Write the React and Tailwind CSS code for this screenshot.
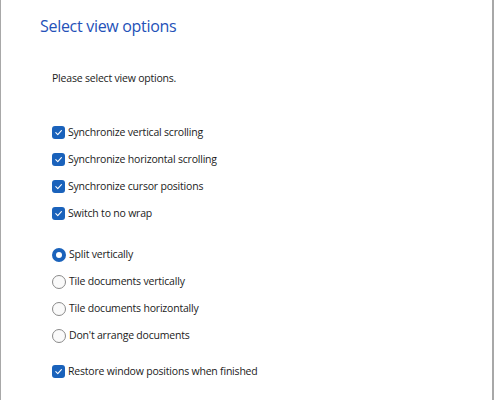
import React from "react";

const font = { fontFamily: '"Open Sans", "Noto Sans", "Liberation Sans", sans-serif' };

function Check({ label }) {
  return (
    <div className="flex h-[27px] items-center">
      <span className="flex h-[13px] w-[13px] items-center justify-center rounded-[3px] bg-[#1a62bb]">
        <svg width="9" height="9" viewBox="0 0 10 10">
          <path d="M2 5.2 L4.2 7.3 L8.2 2.8" fill="none" stroke="#fff" strokeWidth="1.2" strokeLinecap="round" strokeLinejoin="round" />
        </svg>
      </span>
      <span className="ml-[3px] text-[10.5px] tracking-[-0.2px] text-[#1b1b1b]">{label}</span>
    </div>
  );
}

function Radio({ label, checked }) {
  return (
    <div className="flex h-[27px] items-center">
      {checked ? (
        <span className="flex h-[14px] w-[14px] items-center justify-center rounded-full bg-[#1a62bb]">
          <span className="h-[6px] w-[6px] rounded-full bg-white" />
        </span>
      ) : (
        <span className="h-[14px] w-[14px] rounded-full border border-[#8a8a8a] bg-[#fafafa]" />
      )}
      <span className="ml-[3px] text-[10.5px] tracking-[-0.2px] text-[#1b1b1b]">{label}</span>
    </div>
  );
}

export default function App() {
  return (
    <div className="h-[400px] w-[495px] bg-white" style={font}>
      <div className="box-border flex h-full w-[494px] flex-col border-l border-r-2 border-[#a8a8a8] pl-[39px] pt-[14px]">
        <div className="h-[24px] text-[16px] tracking-[-0.3px] leading-[24px] text-[#2451b8]">Select view options</div>
        <div className="mt-[32px] ml-[12px] h-[16px] text-[10.5px] tracking-[-0.2px] leading-[16px] text-[#1b1b1b]">
          Please select view options.
        </div>
        <div className="ml-[12px] mt-[33px] flex flex-col">
          <Check label="Synchronize vertical scrolling" />
          <Check label="Synchronize horizontal scrolling" />
          <Check label="Synchronize cursor positions" />
          <Check label="Switch to no wrap" />
        </div>
        <div className="ml-[12px] mt-[14px] flex flex-col">
          <Radio label="Split vertically" checked />
          <Radio label="Tile documents vertically" />
          <Radio label="Tile documents horizontally" />
          <Radio label="Don't arrange documents" />
        </div>
        <div className="ml-[12px] mt-[9px] flex flex-col">
          <Check label="Restore window positions when finished" />
        </div>
      </div>
    </div>
  );
}
